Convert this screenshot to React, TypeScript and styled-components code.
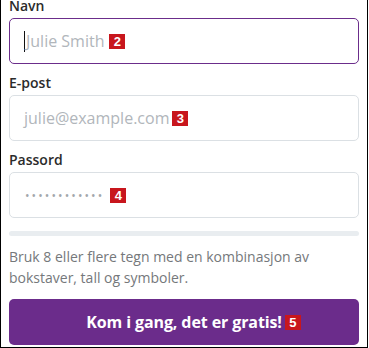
import React from "react";
import styled, { createGlobalStyle } from "styled-components";

const Global = createGlobalStyle`
  html, body { margin: 0; padding: 0; background: #fff; }
  body { font-family: "Open Sans", "Noto Sans", Arial, sans-serif; }
  * { box-sizing: border-box; }
`;

const Frame = styled.div`
  width: 368px;
  height: 348px;
  border: 1px solid #000;
  border-top: none;
  padding: 0 8px;
  overflow: hidden;
  background: #fff;
`;

const Form = styled.form`
  display: flex;
  flex-direction: column;
  margin-top: -4px;
`;

const Field = styled.div`
  display: flex;
  flex-direction: column;
  gap: 2px;
  & + & { margin-top: 9px; }
`;

const Label = styled.label`
  font-size: 14px;
  line-height: 20px;
  font-weight: 600;
  color: #2b2b2b;
`;

const InputBox = styled.div<{ $focused?: boolean }>`
  height: 46px;
  width: 350px;
  border: 1px solid ${(p) => (p.$focused ? "#6b2d8b" : "#dbe0e4")};
  border-radius: 5px;
  display: flex;
  align-items: center;
  padding-left: 14px;
  background: #fff;
`;

const Caret = styled.span`
  width: 1px;
  height: 21px;
  background: #111;
  margin-right: 1px;
`;

const Placeholder = styled.span`
  font-size: 16px;
  color: #b1b6bb;
  white-space: nowrap;
`;

const Dots = styled.span`
  font-size: 12px;
  color: #a3a7ab;
  letter-spacing: 2.1px;
  padding-left: 1px;
`;

const Badge = styled.span<{ $gap?: number }>`
  display: inline-flex;
  align-items: center;
  justify-content: center;
  width: 16px;
  height: 15px;
  margin-left: ${(p) => p.$gap ?? 4}px;
  background: #c8161d;
  color: #fff;
  font-family: "Liberation Sans", Arial, sans-serif;
  font-weight: 700;
  font-size: 13px;
  line-height: 1;
`;

const Meter = styled.div`
  margin-top: 13px;
  height: 5px;
  border-radius: 3px;
  background: #e9edf0;
`;

const Help = styled.p`
  margin: 10px 0 0;
  font-size: 14px;
  line-height: 21px;
  color: #75787b;
`;

const Submit = styled.button`
  margin-top: 11px;
  height: 46px;
  width: 350px;
  border: none;
  border-radius: 5px;
  background: #6b2c8b;
  color: #fff;
  font-family: "Open Sans", "Noto Sans", Arial, sans-serif;
  font-weight: 700;
  font-size: 16px;
  letter-spacing: -0.1px;
  display: flex;
  align-items: center;
  justify-content: center;
  padding: 0;
`;

const SubmitBadge = styled(Badge)`
  margin-right: -19px;
  margin-left: 3px;
`;

export default function App() {
  return (
    <>
      <Global />
      <Frame>
        <Form onSubmit={(e) => e.preventDefault()}>
          <Field>
            <Label>Navn</Label>
            <InputBox $focused>
              <Caret />
              <Placeholder>Julie Smith</Placeholder>
              <Badge $gap={5}>2</Badge>
            </InputBox>
          </Field>
          <Field>
            <Label>E-post</Label>
            <InputBox>
              <Placeholder>julie@example.com</Placeholder>
              <Badge $gap={3}>3</Badge>
            </InputBox>
          </Field>
          <Field>
            <Label>Passord</Label>
            <InputBox>
              <Dots>••••••••••••</Dots>
              <Badge $gap={6}>4</Badge>
            </InputBox>
          </Field>
          <Meter />
          <Help>Bruk 8 eller flere tegn med en kombinasjon av bokstaver, tall og symboler.</Help>
          <Submit type="submit">
            Kom i gang, det er gratis!
            <SubmitBadge>5</SubmitBadge>
          </Submit>
        </Form>
      </Frame>
    </>
  );
}
